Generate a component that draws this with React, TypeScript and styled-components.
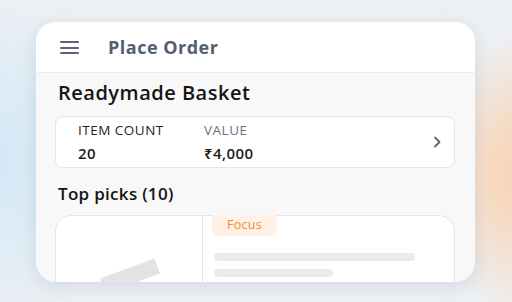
import React from "react";
import styled, { createGlobalStyle } from "styled-components";

const Global = createGlobalStyle`
  html, body { margin: 0; padding: 0; }
  body {
    width: 512px; height: 302px; overflow: hidden;
    font-family: "Open Sans", "Noto Sans", sans-serif;
  }
`;

const Stage = styled.div`
  width: 512px; height: 302px; box-sizing: border-box;
  padding: 22px 37px 20px 36px;
  background:
    radial-gradient(ellipse 110px 170px at 0px 160px, rgba(210, 233, 247, 1), rgba(210,233,247,0) 100%),
    radial-gradient(ellipse 150px 150px at 560px 175px, rgba(250, 212, 180, 1) 30%, rgba(250,212,180,0) 100%),
    #edf0f4;
  display: flex;
`;

const Card = styled.div`
  flex: 1;
  border-radius: 20px;
  overflow: hidden;
  background: #f8f8f8;
  box-shadow: 0 4px 18px rgba(120, 135, 160, 0.22);
  display: flex; flex-direction: column;
`;

const Header = styled.div`
  height: 50px; flex: none;
  background: #fff;
  border-bottom: 1px solid #ededed;
  display: flex; align-items: center;
  padding-left: 24px; gap: 29px;
`;

const Burger = styled.div`
  width: 19px; display: flex; flex-direction: column; gap: 3.5px; margin-top: 1px;
  span { display: block; height: 2px; background: #5a6579; border-radius: 1px; }
`;

const Title = styled.div`
  font-size: 18px; font-weight: 700; color: #545e71; letter-spacing: 0.5px;
`;

const Body = styled.div`
  padding: 6px 20px 0 19px;
  display: flex; flex-direction: column;
`;

const Heading = styled.div<{ $size: number; $mt: number; $ls: number }>`
  font-size: ${p => p.$size}px; font-weight: 600; color: #141414;
  line-height: ${p => p.$size + 8}px; padding-left: 3px;
  letter-spacing: ${p => p.$ls}px;
  margin-top: ${p => p.$mt}px;
`;

const Summary = styled.div`
  margin-top: 9px; height: 52px; box-sizing: border-box;
  background: #fff; border: 1px solid #e2e5eb; border-radius: 8px;
  display: flex; align-items: center; padding: 0 11px 0 22px;
`;

const Col = styled.div<{ $w?: number }>`
  width: ${p => (p.$w ? p.$w + "px" : "auto")};
  display: flex; flex-direction: column; gap: 5px;
`;

const Label = styled.div<{ $muted?: boolean }>`
  font-size: 13.5px; line-height: 17px; letter-spacing: 0.5px;
  color: ${p => (p.$muted ? "#6a7486" : "#232323")};
`;

const Val = styled.div`
  font-size: 15px; line-height: 18px; font-weight: 600; color: #1c1c1c; letter-spacing: 0.4px;
`;

const Spacer = styled.div` flex: 1; `;

const Product = styled.div`
  margin-top: 9px; height: 90px; background: #fff;
  border: 1px solid #e2e5eb; border-radius: 16px;
  display: flex;
`;

const Thumb = styled.div`
  width: 146px; border-right: 1px solid #e2e5eb; display: flex; align-items: flex-start;
  svg { display: block; }
`;

const Info = styled.div`
  flex: 1; padding-left: 9px; display: flex; flex-direction: column;
`;

const Badge = styled.div`
  align-self: flex-start; margin-top: -1px;
  background: #fff1e5; color: #f58a2c; font-size: 12.5px; letter-spacing: 0.3px;
  padding: 2px 15px 3px; border-radius: 0 0 6px 6px; line-height: 16px;
`;

const Bar = styled.div<{ $w: number; $mt: number }>`
  width: ${p => p.$w}px; height: 8px; border-radius: 4px; background: #ebebeb;
  margin-left: 2px; margin-top: ${p => p.$mt}px;
`;

export default function App() {
  return (
    <>
      <Global />
      <Stage>
        <Card>
          <Header>
            <Burger><span /><span /><span /></Burger>
            <Title>Place Order</Title>
          </Header>
          <Body>
            <Heading $size={20} $mt={0} $ls={0.5}>Readymade Basket</Heading>
            <Summary>
              <Col $w={126}>
                <Label>ITEM COUNT</Label>
                <Val>20</Val>
              </Col>
              <Col>
                <Label $muted>VALUE</Label>
                <Val>₹4,000</Val>
              </Col>
              <Spacer />
              <svg width="12" height="14" viewBox="0 0 12 14">
                <path d="M4 2.5 L8.5 7 L4 11.5" fill="none" stroke="#5a6579" strokeWidth="1.8" strokeLinecap="round" strokeLinejoin="round" />
              </svg>
            </Summary>
            <Heading $size={17} $mt={13} $ls={0.3}>Top picks (10)</Heading>
            <Product>
              <Thumb>
                <svg width="146" height="66" viewBox="0 0 146 66">
                  <rect x="45" y="52" width="58" height="16" fill="#e3e3e3" transform="rotate(-20 74 60)" />
                </svg>
              </Thumb>
              <Info>
                <Badge>Focus</Badge>
                <Bar $w={201} $mt={17} />
                <Bar $w={119} $mt={8} />
              </Info>
            </Product>
          </Body>
        </Card>
      </Stage>
    </>
  );
}
